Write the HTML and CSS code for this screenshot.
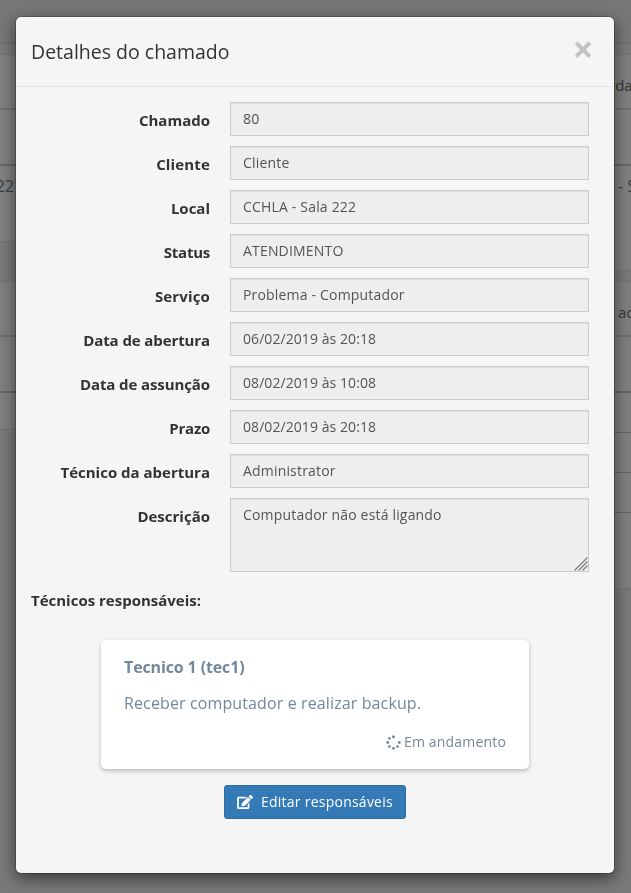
FILE: index.html
```html
<!DOCTYPE html>
<html lang="pt-BR">
<head>
<meta charset="utf-8">
<title>Detalhes do chamado</title>
<link rel="stylesheet" href="styles.css">
</head>
<body>
<div class="page">
  <div class="topbar"></div>
  <div class="columns">
    <div class="column left">
      <div class="panel">
        <div class="row heading"></div>
        <div class="row tools"></div>
        <div class="row last-a"><span class="cell link">22</span></div>
      </div>
      <div class="panel second">
        <div class="row heading"></div>
        <div class="row tools"></div>
        <div class="row last-b"></div>
      </div>
    </div>
    <div class="column right">
      <div class="panel">
        <div class="row heading"><span class="title">rda</span></div>
        <div class="row tools"></div>
        <div class="row last-c"><span class="cell link">- S</span></div>
      </div>
      <div class="panel third">
        <div class="row heading"><span class="title">ac</span></div>
        <div class="row tools"></div>
        <div class="row item"></div>
        <div class="row item"></div>
        <div class="row item"></div>
        <div class="row last-d"></div>
      </div>
    </div>
  </div>
</div>
<div class="backdrop">
  <div class="modal">
    <div class="modal-header">
      <h4>Detalhes do chamado</h4>
      <button class="close" type="button">×</button>
    </div>
    <div class="modal-body">
      <div class="field"><label>Chamado</label><div class="control">80</div></div>
      <div class="field"><label class="wide">Cliente</label><div class="control">Cliente</div></div>
      <div class="field"><label>Local</label><div class="control">CCHLA - Sala 222</div></div>
      <div class="field"><label class="narrow">Status</label><div class="control">ATENDIMENTO</div></div>
      <div class="field"><label class="wide">Serviço</label><div class="control">Problema - Computador</div></div>
      <div class="field"><label class="tight">Data de abertura</label><div class="control date">06/02/2019 às 20:18</div></div>
      <div class="field"><label class="tight">Data de assunção</label><div class="control date">08/02/2019 às 10:08</div></div>
      <div class="field"><label class="narrow">Prazo</label><div class="control date">08/02/2019 às 20:18</div></div>
      <div class="field"><label>Técnico da abertura</label><div class="control">Administrator</div></div>
      <div class="field"><label>Descrição</label><div class="control area">Computador não está ligando
        <svg class="grip" width="14" height="14" viewBox="0 0 14 14"><path d="M.5 13.5l13-13M4.500 13.500l9-9M8.500 13.500l5-5" stroke="#777" stroke-width="1.100" fill="none"/></svg></div></div>
      <div class="subtitle">Técnicos responsáveis:</div>
      <div class="card">
        <div class="name">Tecnico 1 (tec1)</div>
        <div class="task">Receber computador e realizar backup.</div>
        <div class="state">
          <svg width="15" height="15" viewBox="0 0 15 15" fill="#73879c"><circle cx="7.500" cy="1.700" r="1.500"/><circle cx="3.400" cy="3.400" r="1.300"/><circle cx="13.300" cy="7.500" r="1.400"/><circle cx="11.600" cy="11.600" r="1.400"/><circle cx="7.500" cy="13.300" r="1.400"/><circle cx="3.400" cy="11.600" r="1.400"/><circle cx="1.700" cy="7.500" r="1.400"/></svg>
          <span>Em andamento</span>
        </div>
      </div>
      <button class="edit" type="button">
        <svg width="16" height="14" viewBox="0 0 576 512" fill="#fff"><path d="M402.600 83.200l90.200 90.200c3.800 3.800 3.800 10 0 13.800L274.400 405.600l-92.800 10.300c-12.400 1.400-22.900-9.100-21.500-21.500l10.300-92.800L388.800 83.200c3.800-3.800 10-3.800 13.800 0zm162-22.900l-48.800-48.800c-15.200-15.200-39.900-15.200-55.200 0l-35.400 35.400c-3.800 3.800-3.800 10 0 13.800l90.200 90.200c3.800 3.800 10 3.800 13.800 0l35.400-35.400c15.200-15.300 15.200-40 0-55.200zM384 346.200V448H64V128h229.800c3.200 0 6.200-1.300 8.500-3.500l40-40c7.600-7.600 2.200-20.500-8.500-20.500H48C21.500 64 0 85.500 0 112v352c0 26.500 21.500 48 48 48h352c26.500 0 48-21.500 48-48V306.200c0-10.700-12.900-16-20.500-8.500l-40 40c-2.200 2.300-3.500 5.300-3.500 8.500z"/></svg>
        <span>Editar responsáveis</span>
      </button>
    </div>
  </div>
</div>
</body>
</html>
```
FILE: styles.css
```css
* { box-sizing: border-box; }
html, body { height: 100%; overflow: hidden; }
body {
  margin: 0;
  background: #f2f2f2;
  font-family: "Open Sans", sans-serif;
  font-size: 14px;
  line-height: 20px;
  color: #333;
}
.page { height: 893px; overflow: hidden; }
.topbar { height: 44px; background: #ededed; border-bottom: 1px solid #d8d8d8; }
.columns { display: flex; justify-content: space-between; padding-top: 10px; }
.column { width: 30px; overflow: hidden; }
.panel { background: #fff; border-top: 1px solid #e4e4e4; border-bottom: 1px solid #e4e4e4; }
.row { overflow: hidden; white-space: nowrap; }
.heading { height: 55px; border-bottom: 2px solid #ddd; }
.tools { height: 56px; border-bottom: 2px solid #ccc; }
.last-a { height: 75px; }
.last-b { height: 36px; }
.last-c { height: 104px; }
.last-d { height: 75px; }
.item { height: 40px; border-bottom: 1px solid #ccc; }
.second { margin-top: 39px; }
.third { margin-top: 10px; }
.title { display: block; padding: 20px 0 0 8px; font-size: 15px; color: #666; }
.third .title { padding-left: 17px; }
.cell { display: block; padding-top: 10px; font-size: 16px; color: #6a7f97; }
.left .cell { width: 14px; direction: rtl; }
.right .cell { padding-left: 17px; }
.backdrop {
  position: fixed;
  inset: 0;
  background: rgba(0, 0, 0, .5);
  padding-top: 16px;
}
.modal {
  width: 600px;
  height: 858px;
  margin: 0 auto 0 15px;
  background: #f5f5f5;
  background-clip: padding-box;
  border: 1px solid rgba(0, 0, 0, .2);
  border-radius: 6px;
  box-shadow: 0 5px 15px rgba(0, 0, 0, .5);
}
.modal-header {
  display: flex;
  justify-content: space-between;
  height: 70px;
  padding: 15px;
  border-bottom: 1px solid #e5e5e5;
}
h4 { margin: 6px 0 0; font-size: 19.5px; font-weight: 400; line-height: 27px; }
.close {
  width: 30px;
  height: 34px;
  margin: 0 1px 0 0;
  padding: 0;
  border: 0;
  background: none;
  color: #000;
  opacity: .2;
  font: 700 37px/34px "Open Sans", sans-serif;
}
.modal-body { padding: 15px; }
.field { display: flex; justify-content: space-between; margin-bottom: 10px; padding-right: 10px; }
label { width: 179px; padding-top: 8px; font-size: 15px; font-weight: 700; text-align: right; }
.tight { letter-spacing: -.1px; }
.narrow { letter-spacing: -.25px; }
.wide { letter-spacing: .15px; }
.control {
  position: relative;
  width: 359px;
  height: 34px;
  padding: 6px 12px;
  border: 1px solid #ccc;
  background: #eee;
  box-shadow: inset 0 1px 1px rgba(0, 0, 0, .075);
  color: #555;
  letter-spacing: .18px;
}
.date { letter-spacing: .07px; }
.area { height: 74px; }
.grip { position: absolute; right: 0; bottom: 0; }
.subtitle { margin-top: 18px; font-size: 15px; font-weight: 700; }
.card {
  width: 428px;
  height: 129px;
  margin: 30px 0 0 70px;
  padding: 15px 23px;
  border-radius: 5px;
  background: #fff;
  box-shadow: 0 2px 4px rgba(0, 0, 0, .25);
  color: #73879c;
  font-size: 16px;
}
.name { line-height: 24px; font-weight: 700; letter-spacing: -.13px; }
.task { margin-top: 12px; line-height: 24px; letter-spacing: .12px; }
.state { display: flex; justify-content: flex-end; align-items: center; gap: 3px; margin-top: 17px; font-size: 14px; letter-spacing: .18px; }
.edit {
  display: flex;
  align-items: center;
  gap: 8px;
  width: 182px;
  height: 34px;
  margin: 16px 0 0 193px;
  padding: 0 12px;
  border: 1px solid #2e6da4;
  border-radius: 3px;
  background: #337ab7;
  color: #fff;
  font: 14px/20px "Open Sans", sans-serif;
  letter-spacing: .24px;
  white-space: nowrap;
}
```
